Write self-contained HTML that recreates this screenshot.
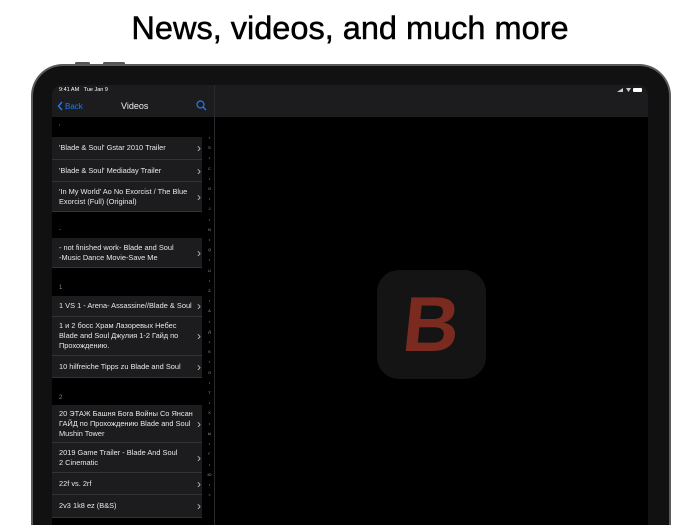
<!DOCTYPE html><html><head><style>
*{margin:0;padding:0;box-sizing:border-box}
html,body{width:700px;height:525px;overflow:hidden}
body{background:#fff;position:relative;font-family:"Liberation Sans","Noto Sans CJK SC",sans-serif}
h1{position:absolute;top:10px;left:0;width:700px;text-align:center;font-size:32.5px;font-weight:400;color:#000;-webkit-text-stroke:0.5px #000}
.frame{position:absolute;left:31px;top:64px;width:640px;height:461px;border-radius:32px 32px 0 0;background:#111;border:2px solid #5a5a5a;border-bottom:none}
.btn{position:absolute;top:62px;height:3px;background:#555;border-radius:2px}
.screen{position:absolute;left:52px;top:85px;width:596px;height:440px;background:#000;border-radius:10px 10px 0 0;overflow:hidden}
.nav{position:absolute;left:0;top:0;width:596px;height:32px;background:#1c1c1e}
.side{position:absolute;left:0;top:0;width:163px;height:440px;border-right:1px solid #2a2a2c}
.st{position:absolute;font-size:5.5px;color:#fff;top:2px}
.row{position:absolute;left:0;width:150px;background:#1c1c1e;color:#e8e8e8;font-size:7.4px;line-height:10px;padding-left:7px;padding-right:8px;display:flex;align-items:center;border-bottom:0.5px solid #333;white-space:nowrap}
.row:after{content:"›";position:absolute;right:1px;font-size:12px;color:#bbb}
.hd{position:absolute;left:7px;font-size:6px;color:#888}
.idx{position:absolute;left:155px;width:5px;font-size:4px;color:#999;text-align:center}
</style></head><body>
<h1>News, videos, and much more</h1>
<div class="btn" style="left:75px;width:15px"></div><div class="btn" style="left:103px;width:22px"></div>
<div class="frame"></div>
<div class="screen">
<div class="nav"></div>
<div class="st" style="left:7px">9:41 AM&nbsp;&nbsp; Tue Jan 9</div>
<div style="position:absolute;right:6px;top:3px;width:9px;height:4px;background:#fff;border-radius:1px"></div>
<div style="position:absolute;right:17px;top:3px;width:5px;height:4px;background:#ccc;clip-path:polygon(0 0,100% 0,50% 100%)"></div>
<div style="position:absolute;right:25px;top:3px;width:6px;height:4px;background:#ccc;clip-path:polygon(0 100%,100% 0,100% 100%)"></div>
<svg style="position:absolute;left:5px;top:16px" width="6" height="10"><path d="M5 1 L1.5 5 L5 9" stroke="#1e7cf0" stroke-width="1.4" fill="none"/></svg>
<div style="position:absolute;left:13px;top:17px;color:#1e7cf0;font-size:8px">Back</div>
<div style="position:absolute;left:69px;top:16px;color:#eee;font-size:9px">Videos</div>
<svg style="position:absolute;left:144px;top:15px" width="11" height="11"><circle cx="4.5" cy="4.5" r="3.5" stroke="#1e7cf0" stroke-width="1.2" fill="none"/><line x1="7" y1="7" x2="10" y2="10" stroke="#1e7cf0" stroke-width="1.3"/></svg>
<div class="side">
<div class="hd" style="top:40px">'</div>
<div class="row" style="top:52px;height:23px">'Blade &amp; Soul' Gstar 2010 Trailer</div>
<div class="row" style="top:75px;height:22px">'Blade &amp; Soul' Mediaday Trailer</div>
<div class="row" style="top:97px;height:30px">'In My World' Ao No Exorcist / The Blue<br>Exorcist (Full) (Original)</div>
<div class="hd" style="top:142px">-</div>
<div class="row" style="top:153px;height:30px">- not finished work- Blade and Soul<br>-Music Dance Movie-Save Me</div>
<div class="hd" style="top:200px">1</div>
<div class="row" style="top:211px;height:21px">1 VS 1 - Arena- Assassine//Blade &amp; Soul</div>
<div class="row" style="top:232px;height:39px">1 и 2 босс Храм Лазоревых Небес<br>Blade and Soul Джулия 1-2 Гайд по<br>Прохождению.</div>
<div class="row" style="top:271px;height:22px">10 hilfreiche Tipps zu Blade and Soul</div>
<div class="hd" style="top:310px">2</div>
<div class="row" style="top:320px;height:38px">20 ЭТАЖ Башня Бога Войны Со Янсан<br>ГАЙД по Прохождению Blade and Soul<br>Mushin Tower</div>
<div class="row" style="top:358px;height:30px">2019 Game Trailer - Blade And Soul<br>2 Cinematic</div>
<div class="row" style="top:388px;height:22px">22f vs. 2rf</div>
<div class="row" style="top:410px;height:23px">2v3 1k8 ez (B&amp;S)</div>
<div class="idx" style="top:48px;line-height:10.2px">•<br>S<br>•<br>C<br>•<br>G<br>•<br>J<br>•<br>N<br>•<br>Q<br>•<br>U<br>•<br>Z<br>•<br>A<br>•<br>Д<br>•<br>К<br>•<br>О<br>•<br>Т<br>•<br>Х<br>•<br>Ы<br>•<br>Г<br>•<br>Ю<br>•<br>&lt;</div>
</div>
<div style="position:absolute;left:325px;top:185px;width:109px;height:109px;border-radius:22px;background:#141414"></div>
<div style="position:absolute;left:325px;top:185px;width:109px;height:109px;text-align:center;font-family:'Liberation Sans',sans-serif;font-weight:bold;font-size:78px;line-height:109px;color:#7a2a1e;transform:skewX(-6deg)">B</div>
</div>
</body></html>
